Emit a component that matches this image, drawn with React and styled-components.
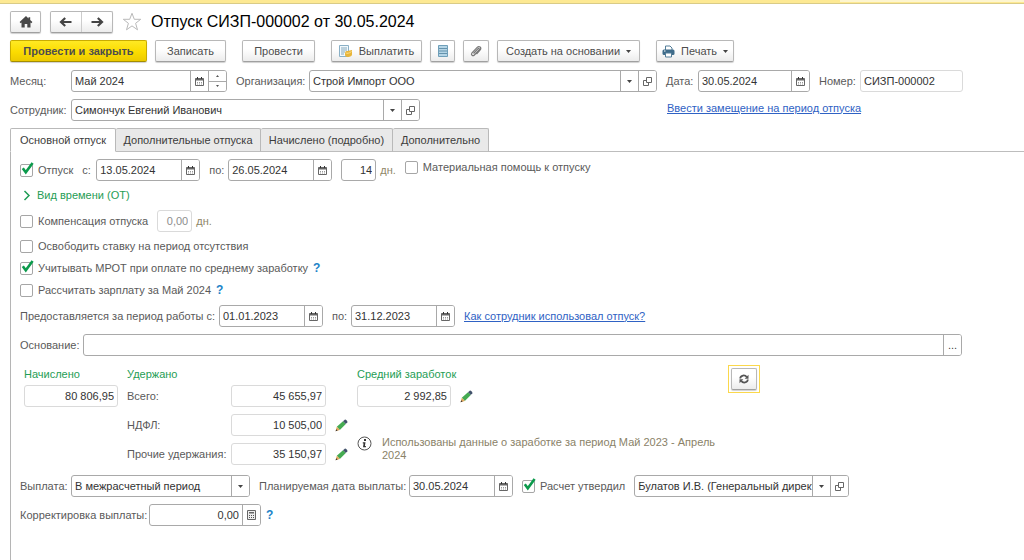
import React, { useState } from "react";
import styled, { createGlobalStyle, css } from "styled-components";

const GlobalStyle = createGlobalStyle`
  *, *::before, *::after { box-sizing: border-box; }
  body {
    margin: 0;
    background: #fff;
    color: #444;
    font: 11px/15px "Liberation Sans", Arial, sans-serif;
  }
  button, input, select { font: inherit; color: inherit; }
`;

const Page = styled.div`
  min-height: 100vh;
  display: flex;
  flex-direction: column;
`;

const TopStrip = styled.div`
  height: 4px;
  display: flex;
  justify-content: flex-end;
  background: #fde993;
  border-bottom: 1px solid #d9cb87;
`;

const TopStripTail = styled.div`
  width: 18%;
  height: 2px;
  background: #fdf5cf;
`;

const Header = styled.header`
  display: flex;
  align-items: center;
  gap: 9px;
  padding: 7px 10px 0;
`;

const Title = styled.h1`
  margin: 0;
  font-size: 16px;
  line-height: 22px;
  font-weight: 400;
  color: #000;
`;

const raised = css`
  height: 22px;
  border: 1px solid #b8b8b8;
  border-bottom-color: #a0a0a0;
  border-radius: 2px;
  background: linear-gradient(#fff 40%, #ececec);
  box-shadow: 0 1px 1px #d0d0d0;
`;

const Button = styled.button`
  ${raised}
  min-width: ${(p) => p.$w}px;
  display: inline-flex;
  align-items: center;
  justify-content: center;
  gap: 6px;
  padding: 0 5px;
  color: #4d4d4d;
  white-space: nowrap;
  ${(p) =>
    p.$primary &&
    css`
      font-weight: 700;
      border-color: #c9ac00;
      border-bottom-color: #a48d00;
      background: linear-gradient(#ffe924, #fbdc00 55%, #ecca00);
    `}
`;

const NavPair = styled.div`
  ${raised}
  display: flex;
  width: 63px;
`;

const NavButton = styled.button`
  flex: 1;
  display: flex;
  align-items: center;
  justify-content: center;
  padding: 0;
  border: 0;
  background: none;
  & + & { border-left: 1px solid #ccc; }
`;

const IconButton = styled.button`
  display: flex;
  padding: 0;
  border: 0;
  background: none;
`;

const Toolbar = styled.div`
  display: flex;
  gap: 16px;
  padding: 7px 10px 0;
`;

const ToolGroup = styled.div`
  display: flex;
  gap: 8px;
`;

const HeadForm = styled.div`
  display: flex;
  flex-direction: column;
  gap: 7px;
  padding: 8px 61px 7px 10px;
`;

const Row = styled.div`
  display: flex;
  align-items: center;
  min-height: ${(p) => (p.$compact ? 15 : 22)}px;
  gap: 9px;
`;

const Pair = styled.div`
  display: flex;
  align-items: center;
  flex: ${(p) => (p.$grow ? "1 1 0" : "none")};
  min-width: 0;
`;

const Caption = styled.label`
  flex: none;
  width: ${(p) => (p.$w ? `${p.$w}px` : "auto")};
  color: #5a5a5a;
  white-space: nowrap;
`;

const Frame = styled.div`
  display: flex;
  flex: ${(p) => (p.$w ? "none" : "1 1 0")};
  width: ${(p) => (p.$w ? `${p.$w}px` : "auto")};
  min-width: 0;
  height: 22px;
  border: 1px solid ${(p) => (p.$quiet ? "#dadada" : "#a9a9a9")};
  border-radius: 3px;
  background: #fff;
  overflow: hidden;
`;

const control = css`
  flex: 1 1 0;
  min-width: 0;
  width: 0;
  height: 20px;
  padding: 0 0 0 3px;
  border: 0;
  outline: 0;
  background: none;
  color: #333;
`;

const TextInput = styled.input`
  ${control}
  padding-right: 3px;
  text-align: ${(p) => (p.$right ? "right" : "left")};
  ${(p) => p.disabled && "color: #8d8d8d;"}
`;

const Select = styled.select`
  ${control}
  appearance: none;
`;

const cell = css`
  flex: none;
  width: 18px;
  display: flex;
  align-items: center;
  justify-content: center;
  padding: 0;
  border: 0;
  border-left: 1px solid #a9a9a9;
  background: #fff;
`;
const CellButton = styled.button`${cell}`;
const CellMark = styled.span`
  ${cell}
  pointer-events: none;
`;

const Spinner = styled.div`
  flex: none;
  width: 18px;
  display: flex;
  flex-direction: column;
  border-left: 1px solid #a9a9a9;
`;
const SpinButton = styled.button`
  flex: 1;
  display: flex;
  align-items: center;
  justify-content: center;
  padding: 0;
  border: 0;
  background: #fff;
  & + & { border-top: 1px solid #a9a9a9; }
`;

const Link = styled.a`
  color: #2f62c4;
  text-decoration: underline;
  white-space: nowrap;
`;

const LinkSlot = styled.div`
  width: 296px;
  margin-left: auto;
  padding-bottom: 4px;
`;

const Tabs = styled.div`
  display: flex;
  padding-left: 10px;
  height: 24px;
  background: linear-gradient(#bdbdbd, #bdbdbd) 10px 100% / 100% 1px no-repeat;
`;

const Tab = styled.button`
  width: ${(p) => p.$w}px;
  padding: 0;
  border: 1px solid #b9b9b9;
  border-left-width: ${(p) => (p.$first ? 1 : 0)}px;
  border-bottom-color: ${(p) => (p.$active ? "#fff" : "#bdbdbd")};
  border-radius: 2px 2px 0 0;
  background: ${(p) => (p.$active ? "#fff" : "#e9e9e9")};
  color: #3c3c3c;
  white-space: nowrap;
`;

const Panel = styled.main`
  flex: 1;
  display: flex;
  flex-direction: column;
  gap: 7px;
  margin-left: 10px;
  padding: 7px 62px 20px 9px;
  border-left: 1px solid #b5b5b5;
`;

const CheckLabel = styled.label`
  display: flex;
  align-items: center;
  gap: 5px;
  color: #5a5a5a;
  white-space: nowrap;
`;

const CheckBox = styled.span`
  position: relative;
  width: 13px;
  height: 13px;
  flex: none;
  svg {
    position: absolute;
    left: 1px;
    top: -2px;
    pointer-events: none;
  }
`;

const CheckInput = styled.input`
  appearance: none;
  display: block;
  width: 13px;
  height: 13px;
  margin: 0;
  border: 1px solid #a6a6a6;
  border-radius: 2px;
  background: #fff;
`;

const Raised = styled.div`
  padding-bottom: 6px;
`;

const Unit = styled.span`
  color: #8f8768;
  margin-left: -5px;
`;

const Group = styled.button`
  display: flex;
  align-items: center;
  gap: 6px;
  padding: 0 0 0 3px;
  border: 0;
  background: none;
  color: #1f9d55;
`;

const Help = styled.button`
  padding: 0;
  border: 0;
  background: none;
  color: #1c83c8;
  font-size: 12px;
  font-weight: 700;
`;

const HelpRow = styled(Row)`
  gap: 5px;
`;

const Totals = styled.section`
  display: flex;
  align-items: flex-start;
  gap: 9px;
  padding: 0 0 3px 4px;
`;

const TotalsColumn = styled.div`
  display: flex;
  flex-direction: column;
  gap: 7px;
  width: ${(p) => (p.$w ? `${p.$w}px` : "auto")};
`;

const ColumnTitle = styled.h2`
  margin: 0 0 -7px;
  font-size: 11px;
  line-height: 22px;
  font-weight: 400;
  color: #1f9d55;
`;

const Note = styled.p`
  display: flex;
  align-items: flex-start;
  gap: 10px;
  margin: 22px 0 0;
  line-height: 13px;
  color: #8a8268;
  svg { flex: none; }
`;

const RefreshFrame = styled.div`
  padding: 2px;
  border: 1px solid #fbd84c;
  margin-top: 2px;
`;

const svgProps = (w, h = w) => ({ width: w, height: h, viewBox: `0 0 ${w} ${h}`, "aria-hidden": true });

const HomeIcon = () => (
  <svg {...svgProps(14)}>
    <path d="M7 1 .6 7.100l1 1.100L2.500 7.500V12.500h3.200V9h2.600v3.500h3.200v-5l.9.7 1-1.100L11.200 5V2.200H9.500v1.200z" fill="#484848" />
  </svg>
);
const ArrowIcon = ({ flip }) => (
  <svg {...svgProps(14, 12)}>
    <path d={flip ? "M1.500 6h10M7.800 2 12 6 7.800 10" : "M12.500 6h-10M6.200 2 2 6l4.200 4"} fill="none" stroke="#444" strokeWidth="2.200" />
  </svg>
);
const StarIcon = () => (
  <svg {...svgProps(20)}>
    <path d="m10 1.300 2.300 6h6.400l-5.100 4 1.900 6.500-5.500-3.900-5.500 3.900 1.900-6.500-5.100-4h6.400z" fill="#fff" stroke="#b9b9b9" />
  </svg>
);
const CaretIcon = () => (
  <svg {...svgProps(5, 3)}><path d="M0 0h5L2.500 3z" fill="#444" /></svg>
);
const CalendarIcon = () => (
  <svg {...svgProps(9)}>
    <path d="M.5 1.500h8v7h-8z" fill="#fff" stroke="#666" />
    <path d="M.5 1.500h8v2h-8z" fill="#666" />
    <path d="M2 0h1v2H2zM6 0h1v2H6z" fill="#333" />
    <path d="M2 5.500h5M2 7h5" stroke="#999" strokeDasharray="1 1" />
  </svg>
);
const OpenIcon = () => (
  <svg {...svgProps(9)}>
    <path d="M3.500.5h5v5h-5z" fill="none" stroke="#666" />
    <path d="M3.500 3.500h-3v5h5v-3" fill="none" stroke="#666" />
  </svg>
);
const CalcIcon = () => (
  <svg {...svgProps(9, 10)}>
    <path d="M.5.5h8v9h-8z" fill="#eee" stroke="#666" />
    <path d="M2 2h5v1.500H2z" fill="#666" />
    <path d="M2 5.500h5M2 7.500h5" stroke="#555" strokeDasharray="1 1" />
  </svg>
);
const DotIcon = () => (
  <svg {...svgProps(3, 2)}><path d="M0 0h3L1.500 2z" fill="#555" /></svg>
);
const DotUpIcon = () => (
  <svg {...svgProps(3, 2)}><path d="M0 2h3L1.500 0z" fill="#555" /></svg>
);
const PayIcon = () => (
  <svg {...svgProps(14)}>
    <path d="M.5 1.500h9v11h-9z" fill="#f1f8fc" stroke="#8ab0c6" />
    <path d="M2 4h6M2 6h6M2 8h4M2 10h3" stroke="#85a9bd" />
    <path d="M6 9c0-1.500 1-2 2.500-2L13 6v4.500c0 1.500-1.500 2.500-4 2.500S6 12 6 10.500z" fill="#e8b53a" />
    <path d="M6.500 8.800C8 9.600 10 9.600 12.500 7.500" stroke="#fbe08a" fill="none" />
  </svg>
);
const ListIcon = () => (
  <svg {...svgProps(10, 12)}>
    <path d="M.5.5h9v11h-9z" fill="#b5d5e6" stroke="#6f9fb9" />
    <path d="M1 3.500h8M1 6h8M1 8.500h8" stroke="#6593ad" />
  </svg>
);
const ClipIcon = () => (
  <svg {...svgProps(14)}>
    <path d="m4.500 9.500 4.300-4.600c1-1 2.200.100 1.300 1.100l-4.700 5c-1.700 1.600-3.900-.3-2.400-2.100l5.200-5.500c2-2 4.700.2 3 2.500L7.500 10" fill="none" stroke="#777" strokeWidth="1.200" />
  </svg>
);
const PrinterIcon = () => (
  <svg {...svgProps(13)}>
    <path d="M3.500 6V1h4.500l2 2v3" fill="#fff" stroke="#527d98" />
    <rect x=".5" y="4.500" width="12" height="5.500" rx="1.500" fill="#3f6c8a" />
    <path d="M3.500 8h6v4h-6z" fill="#fff" stroke="#527d98" />
    <path d="M2 6h1.500" stroke="#fff" />
  </svg>
);
const PencilIcon = () => (
  <svg {...svgProps(13)}>
    <path d="M1.800 7.800 8 2.200 10.800 5 4.800 10.900z" fill="#45ab52" />
    <path d="M1.800 7.800.6 12.300l4.200-1.400z" fill="#e2a65a" />
    <path d="m.6 12.300.6-2 1.400 1.300z" fill="#333" />
    <path d="m8 2.200 1.800-1.500c.7-.5 3.100 1.600 2.500 2.500L10.800 5z" fill="#42526b" />
  </svg>
);
const InfoIcon = () => (
  <svg {...svgProps(15)}>
    <circle cx="7.500" cy="7.500" r="6.500" fill="#fff" stroke="#555" />
    <path d="M7 3h2v2H7zM5.800 6.200h2.700L7.900 10h1v1.200H6L6.600 7.400h-.8z" fill="#333" />
  </svg>
);
const RefreshIcon = () => (
  <svg {...svgProps(10)}>
    <path d="M1.200 4.500C1.500 1 6 .6 7.700 3M8.800 5.500C8.500 9 4 9.400 2.300 7" fill="none" stroke="#555" strokeWidth="1.800" />
    <path d="M9.500.8v3.900H5.700zM.5 9.200V5.300h3.800z" fill="#555" />
  </svg>
);
const ChevronIcon = () => (
  <svg {...svgProps(8, 11)}><path d="m1.500 1 4.500 4.500L1.500 10" fill="none" stroke="#1f9d55" strokeWidth="1.500" /></svg>
);
const TickIcon = () => (
  <svg {...svgProps(13)}><path d="m1.800 6.200 3 4L11.600 1" fill="none" stroke="#0c9a4c" strokeWidth="2.600" /></svg>
);

function Check({ id, label, initial = false }) {
  const [on, setOn] = useState(initial);
  return (
    <CheckLabel htmlFor={id}>
      <CheckBox>
        <CheckInput id={id} type="checkbox" checked={on} onChange={() => setOn(!on)} />
        {on && <TickIcon />}
      </CheckBox>
      {label}
    </CheckLabel>
  );
}

function Field({ id, label, name, lw, w, value, right, quiet, disabled, options, children }) {
  return (
    <Pair $grow={!w}>
      {label && <Caption htmlFor={id} $w={lw}>{label}</Caption>}
      <Frame $w={w} $quiet={quiet || disabled}>
        {options ? (
          <>
            <Select id={id} defaultValue={value} aria-label={name}><option>{value}</option></Select>
            <CellMark><CaretIcon /></CellMark>
          </>
        ) : (
          <TextInput id={id} defaultValue={value} $right={right} disabled={disabled} readOnly={quiet} aria-label={name} />
        )}
        {children}
      </Frame>
    </Pair>
  );
}

const CalendarCell = () => <CellButton aria-label="Календарь"><CalendarIcon /></CellButton>;
const OpenCell = () => <CellButton aria-label="Открыть"><OpenIcon /></CellButton>;
const Edit = () => <IconButton aria-label="Изменить"><PencilIcon /></IconButton>;

const TABS = [
  ["Основной отпуск", 106],
  ["Дополнительные отпуска", 145],
  ["Начислено (подробно)", 132],
  ["Дополнительно", 96],
];

export default function App() {
  const [tab, setTab] = useState(0);
  return (
    <Page>
      <GlobalStyle />
      <TopStrip><TopStripTail /></TopStrip>
      <Header>
        <Button $w={31} aria-label="Главная"><HomeIcon /></Button>
        <NavPair>
          <NavButton aria-label="Назад"><ArrowIcon /></NavButton>
          <NavButton aria-label="Вперед"><ArrowIcon flip /></NavButton>
        </NavPair>
        <IconButton aria-label="В избранное"><StarIcon /></IconButton>
        <Title>Отпуск СИЗП-000002 от 30.05.2024</Title>
      </Header>

      <Toolbar>
        <ToolGroup>
          <Button $w={137} $primary>Провести и закрыть</Button>
          <Button $w={71}>Записать</Button>
        </ToolGroup>
        <Button $w={73}>Провести</Button>
        <ToolGroup>
          <Button $w={91}><PayIcon />Выплатить</Button>
          <Button $w={25} aria-label="Список"><ListIcon /></Button>
          <Button $w={25} aria-label="Файлы"><ClipIcon /></Button>
          <Button $w={143}>Создать на основании<CaretIcon /></Button>
        </ToolGroup>
        <Button $w={77}><PrinterIcon />Печать<CaretIcon /></Button>
      </Toolbar>

      <HeadForm>
        <Row>
          <Field id="month" label="Месяц:" lw={61} w={156} value="Май 2024">
            <CalendarCell />
            <Spinner>
              <SpinButton aria-label="Больше"><DotUpIcon /></SpinButton>
              <SpinButton aria-label="Меньше"><DotIcon /></SpinButton>
            </Spinner>
          </Field>
          <Field id="org" label="Организация:" lw={73} value="Строй Импорт ООО" options><OpenCell /></Field>
          <Field id="date" label="Дата:" lw={32} w={112} value="30.05.2024"><CalendarCell /></Field>
          <Field id="number" label="Номер:" lw={41} w={103} value="СИЗП-000002" quiet />
        </Row>
        <Row>
          <Field id="employee" label="Сотрудник:" lw={61} w={349} value="Симончук Евгений Иванович" options><OpenCell /></Field>
          <LinkSlot><Link href="#replace">Ввести замещение на период отпуска</Link></LinkSlot>
        </Row>
      </HeadForm>

      <Tabs role="tablist">
        {TABS.map(([name, w], i) => (
          <Tab key={name} role="tab" aria-selected={i === tab} $active={i === tab} $first={i === 0} $w={w} onClick={() => setTab(i)}>
            {name}
          </Tab>
        ))}
      </Tabs>

      <Panel>
        <Row>
          <Check id="leave" label="Отпуск" initial />
          <Field id="from" label="с:" lw={14} w={104} value="13.05.2024"><CalendarCell /></Field>
          <Field id="to" label="по:" lw={19} w={104} value="26.05.2024"><CalendarCell /></Field>
          <Field id="days" name="Дней" w={35} value="14" right />
          <Unit>дн.</Unit>
          <Raised><Check id="aid" label="Материальная помощь к отпуску" /></Raised>
        </Row>
        <Row $compact><Group><ChevronIcon />Вид времени (ОТ)</Group></Row>
        <Row>
          <Check id="comp" label="Компенсация отпуска" />
          <Field id="compdays" name="Дней компенсации" w={35} value="0,00" right disabled />
          <Unit>дн.</Unit>
        </Row>
        <Row $compact><Check id="free" label="Освободить ставку на период отсутствия" /></Row>
        <HelpRow $compact>
          <Check id="mrot" label="Учитывать МРОТ при оплате по среднему заработку" initial />
          <Help>?</Help>
        </HelpRow>
        <HelpRow $compact>
          <Check id="salary" label="Рассчитать зарплату за Май 2024" />
          <Help>?</Help>
        </HelpRow>
        <Row>
          <Field id="pfrom" label="Предоставляется за период работы с:" lw={199} w={104} value="01.01.2023"><CalendarCell /></Field>
          <Field id="pto" label="по:" lw={19} w={104} value="31.12.2023"><CalendarCell /></Field>
          <Link href="#usage">Как сотрудник использовал отпуск?</Link>
        </Row>
        <Row>
          <Field id="reason" label="Основание:" lw={63} value=""><CellButton aria-label="Выбрать">...</CellButton></Field>
        </Row>

        <Totals>
          <TotalsColumn>
            <ColumnTitle>Начислено</ColumnTitle>
            <Field id="accrued" name="Начислено" w={94} value="80 806,95" right quiet />
          </TotalsColumn>
          <TotalsColumn $w={221}>
            <ColumnTitle>Удержано</ColumnTitle>
            <Row><Field id="all" label="Всего:" lw={104} w={95} value="45 655,97" right quiet /></Row>
            <Row><Field id="ndfl" label="НДФЛ:" lw={104} w={95} value="10 505,00" right quiet /><Edit /></Row>
            <Row><Field id="other" label="Прочие удержания:" lw={104} w={95} value="35 150,97" right quiet /><Edit /></Row>
          </TotalsColumn>
          <TotalsColumn $w={362}>
            <ColumnTitle>Средний заработок</ColumnTitle>
            <Row><Field id="average" name="Средний заработок" w={94} value="2 992,85" right quiet /><Edit /></Row>
            <Note><InfoIcon />Использованы данные о заработке за период Май 2023 - Апрель 2024</Note>
          </TotalsColumn>
          <RefreshFrame><Button $w={26} aria-label="Обновить"><RefreshIcon /></Button></RefreshFrame>
        </Totals>

        <Row>
          <Field id="pay" label="Выплата:" lw={51} w={179} value="В межрасчетный период" options />
          <Field id="paydate" label="Планируемая дата выплаты:" lw={150} w={104} value="30.05.2024"><CalendarCell /></Field>
          <Check id="approved" label="Расчет утвердил" initial />
          <Field id="approver" name="Утвердил" w={215} value="Булатов И.В. (Генеральный директор)" options><OpenCell /></Field>
        </Row>
        <HelpRow>
          <Field id="fix" label="Корректировка выплаты:" lw={129} w={112} value="0,00" right>
            <CellButton aria-label="Калькулятор"><CalcIcon /></CellButton>
          </Field>
          <Help>?</Help>
        </HelpRow>
      </Panel>
    </Page>
  );
}
